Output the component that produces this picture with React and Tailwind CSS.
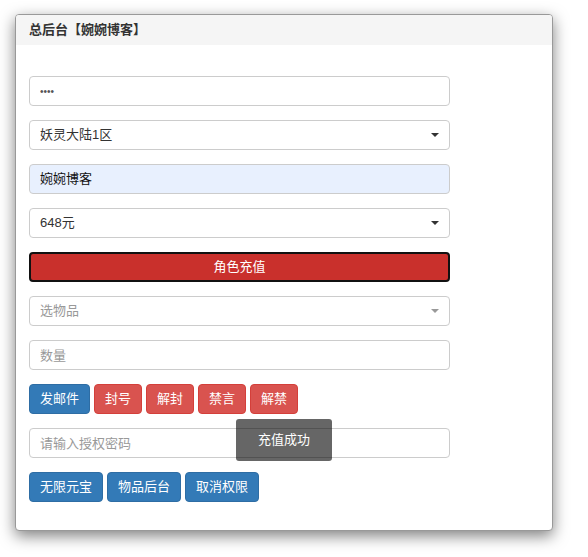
export default function App() {
    const font = { fontFamily: '"Liberation Sans", "Noto Sans CJK SC", sans-serif' };

    const Caret = ({ light }) => (
        <span className={`border-x-[4px] border-t-[4px] border-x-transparent ${light ? 'border-t-[#999]' : 'border-t-[#333]'}`} />
    );

    return (
        <div className="min-h-screen bg-white pt-[14px] pl-[15px]" style={font}>
            <div className="relative w-[538px] h-[517px] bg-white border border-[#999] rounded-[4px] shadow-[0_5px_15px_rgba(0,0,0,0.5)] overflow-hidden">
                {/* HEADER */}
                <div className="h-[30px] bg-[#f5f5f5] px-[13px] flex items-center text-[13px] font-bold text-[#333]">
                    总后台【婉婉博客】
                </div>

                {/* BODY */}
                <div className="pt-[31px] px-[13px] flex flex-col gap-[14px] text-[13px]">
                    <input
                        type="password"
                        readOnly
                        value="1234"
                        className="w-[421px] h-[30px] px-[10px] border border-[#ccc] rounded-[4px] text-[#555] text-[10px] outline-none"
                    />
                    <div className="w-[421px] h-[30px] px-[10px] border border-[#ccc] rounded-[4px] flex items-center justify-between text-[#333]">
                        <span>妖灵大陆1区</span>
                        <Caret />
                    </div>
                    <div className="w-[421px] h-[30px] px-[10px] border border-[#ccc] rounded-[4px] flex items-center bg-[#e8f0fe] text-[#111]">
                        婉婉博客
                    </div>
                    <div className="w-[421px] h-[30px] px-[10px] border border-[#ccc] rounded-[4px] flex items-center justify-between text-[#333]">
                        <span>648元</span>
                        <Caret />
                    </div>
                    <button className="w-[421px] h-[30px] bg-[#c9302c] border-2 border-[#111] rounded-[4px] text-white text-[13px]">
                        角色充值
                    </button>
                    <div className="w-[421px] h-[30px] px-[10px] border border-[#ccc] rounded-[4px] flex items-center justify-between text-[#999]">
                        <span>选物品</span>
                        <Caret light />
                    </div>
                    <input
                        placeholder="数量"
                        className="w-[421px] h-[30px] px-[10px] border border-[#ccc] rounded-[4px] placeholder:text-[#999] outline-none"
                    />
                    <div className="flex gap-[4px]">
                        <button className="h-[30px] px-[10px] bg-[#337ab7] border border-[#2e6da4] rounded-[4px] text-white">发邮件</button>
                        <button className="h-[30px] px-[10px] bg-[#d9534f] border border-[#d43f3a] rounded-[4px] text-white">封号</button>
                        <button className="h-[30px] px-[10px] bg-[#d9534f] border border-[#d43f3a] rounded-[4px] text-white">解封</button>
                        <button className="h-[30px] px-[10px] bg-[#d9534f] border border-[#d43f3a] rounded-[4px] text-white">禁言</button>
                        <button className="h-[30px] px-[10px] bg-[#d9534f] border border-[#d43f3a] rounded-[4px] text-white">解禁</button>
                    </div>
                    <input
                        placeholder="请输入授权密码"
                        className="w-[421px] h-[30px] px-[10px] border border-[#ccc] rounded-[4px] placeholder:text-[#999] outline-none"
                    />
                    <div className="flex gap-[4px]">
                        <button className="h-[30px] px-[10px] bg-[#337ab7] border border-[#2e6da4] rounded-[4px] text-white">无限元宝</button>
                        <button className="h-[30px] px-[10px] bg-[#337ab7] border border-[#2e6da4] rounded-[4px] text-white">物品后台</button>
                        <button className="h-[30px] px-[10px] bg-[#337ab7] border border-[#2e6da4] rounded-[4px] text-white">取消权限</button>
                    </div>
                </div>

                {/* TOAST */}
                <div className="absolute left-[220px] top-[404px] w-[96px] h-[42px] bg-[rgba(0,0,0,0.6)] rounded-[3px] flex items-center justify-center text-white text-[13px]">
                    充值成功
                </div>
            </div>
        </div>
    );
}
